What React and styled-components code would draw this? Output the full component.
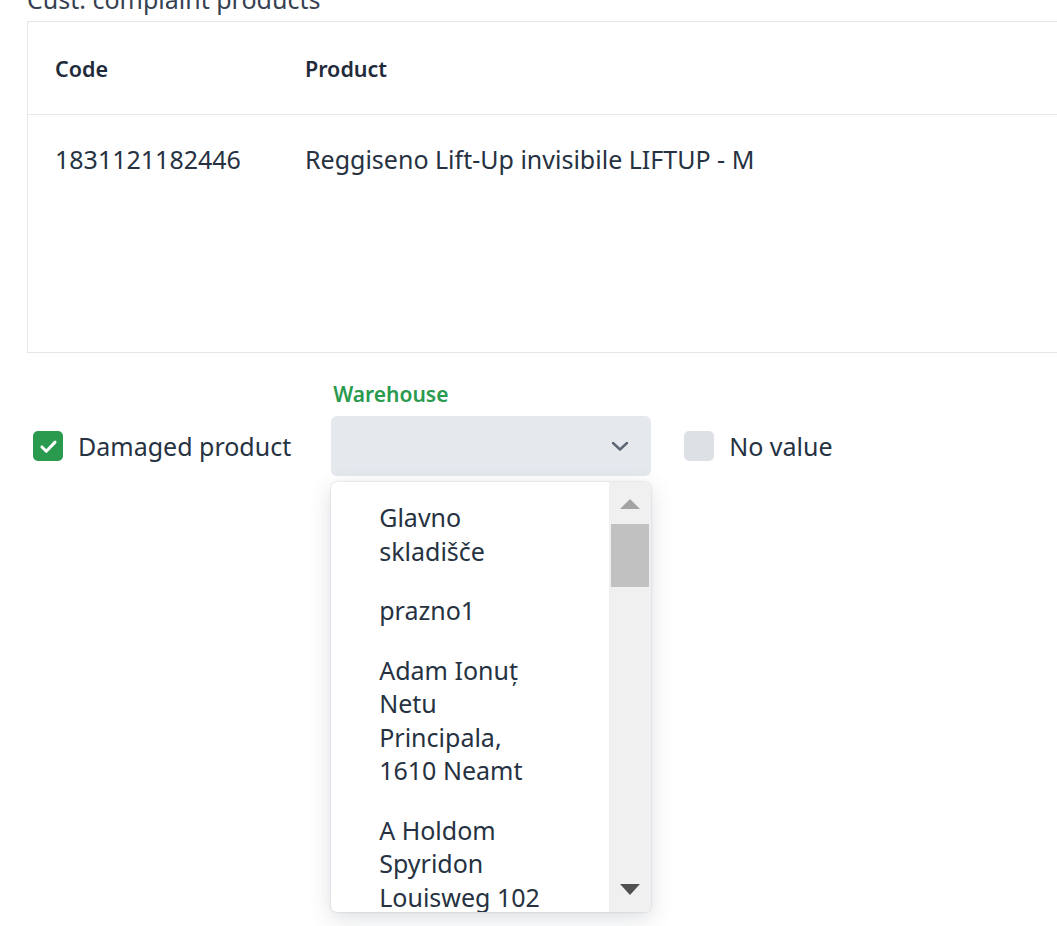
import React from 'react';
import styled, { createGlobalStyle } from 'styled-components';

const GlobalStyle = createGlobalStyle`
  html, body {
    margin: 0;
    padding: 0;
    background: #ffffff;
    overflow: hidden;
  }
  body {
    font-family: "Noto Sans", "Open Sans", sans-serif;
    color: #263241;
  }
`;

const Page = styled.div`
  padding-left: 27px;
  height: 943px;
  position: relative;
`;

const Title = styled.div`
  font-size: 25px;
  line-height: 32px;
  margin: -17px 0 6px;
  color: #364152;
`;

const Table = styled.div`
  width: 1060px;
  height: 332px;
  border: 1px solid #e4e6ea;
  border-right: none;
  box-sizing: border-box;
`;

const Row = styled.div`
  display: grid;
  grid-template-columns: 250px 1fr;
  padding-left: 27px;
  height: ${(p) => p.$height}px;
  align-items: ${(p) => (p.$head ? 'center' : 'start')};
  padding-top: ${(p) => (p.$head ? 0 : 28)}px;
  box-sizing: border-box;
  border-bottom: ${(p) => (p.$head ? '1px solid #e6e8ee' : 'none')};
`;

const HeadCell = styled.div`
  font-size: 21.5px;
  font-weight: 600;
  color: #1f2a3a;
`;

const Cell = styled.div`
  font-size: 25px;
  line-height: 32px;
  color: #263241;
`;

const Controls = styled.div`
  display: flex;
  align-items: flex-end;
  margin-top: 35px;
  padding-left: 6px;
`;

const CheckGroup = styled.label`
  display: flex;
  align-items: center;
  gap: 15px;
  height: 60px;
  font-size: 25px;
  color: #263241;
  margin-right: ${(p) => p.$gap || 0}px;
`;

const Box = styled.span`
  width: 30px;
  height: 30px;
  border-radius: 5px;
  background: ${(p) => (p.$checked ? '#2a9b4e' : '#dde1e6')};
  display: flex;
  align-items: center;
  justify-content: center;
`;

const Field = styled.div`
  display: flex;
  flex-direction: column;
  gap: 15px;
  margin-right: 33px;
  position: relative;
`;

const FieldLabel = styled.div`
  font-size: 21px;
  font-weight: 600;
  color: #2a9b4e;
  padding-left: 2px;
  line-height: 13px;
`;

const Select = styled.div`
  width: 320px;
  height: 60px;
  border-radius: 6px;
  background: #e5e8ed;
  display: flex;
  align-items: center;
  justify-content: flex-end;
  padding-right: 19px;
  box-sizing: border-box;
`;

const Dropdown = styled.div`
  position: absolute;
  top: calc(100% + 6px);
  left: 0;
  width: 320px;
  height: 430px;
  background: #ffffff;
  border-radius: 6px;
  box-shadow: 0 0 2px rgba(60, 70, 90, 0.25), 0 6px 22px rgba(60, 70, 90, 0.18);
  display: flex;
  overflow: hidden;
`;

const Options = styled.div`
  flex: 1;
  padding: 19px 60px 0 48px;
  overflow: hidden;
`;

const Option = styled.div`
  font-size: 25px;
  line-height: 33.5px;
  padding-bottom: 26px;
  color: #263241;
`;

const Scrollbar = styled.div`
  width: 42px;
  background: #f0f0f0;
  display: flex;
  flex-direction: column;
  align-items: center;
  padding: 17px 0 17px;
  box-sizing: border-box;
`;

const Arrow = styled.div`
  width: 0;
  height: 0;
  border-left: 10px solid transparent;
  border-right: 10px solid transparent;
  ${(p) =>
    p.$down
      ? 'border-top: 11px solid #505050; margin-top: auto;'
      : 'border-bottom: 10px solid #a3a3a3;'}
`;

const Thumb = styled.div`
  width: 38px;
  height: 63px;
  background: #c1c1c1;
  margin-top: 15px;
`;

const options = [
  'Glavno skladišče',
  'prazno1',
  'Adam Ionuț Netu Principala, 1610 Neamt',
  'A Holdom Spyridon Louisweg 102',
];

export default function App() {
  return (
    <>
      <GlobalStyle />
      <Page>
        <Title>Cust. complaint products</Title>
        <Table>
          <Row $head $height={93}>
            <HeadCell>Code</HeadCell>
            <HeadCell>Product</HeadCell>
          </Row>
          <Row>
            <Cell>1831121182446</Cell>
            <Cell>Reggiseno Lift-Up invisibile LIFTUP - M</Cell>
          </Row>
        </Table>

        <Controls>
          <CheckGroup $gap={40}>
            <Box $checked>
              <svg width="21" height="21" viewBox="0 0 24 24" fill="none" stroke="#fff" strokeWidth="3.4" strokeLinecap="round" strokeLinejoin="round">
                <path d="M4.5 12.5l5 5 10-10.5" />
              </svg>
            </Box>
            Damaged product
          </CheckGroup>

          <Field>
            <FieldLabel>Warehouse</FieldLabel>
            <Select>
              <svg width="24" height="24" viewBox="0 0 24 24" fill="none" stroke="#5d6675" strokeWidth="2.4" strokeLinecap="round" strokeLinejoin="round">
                <path d="M5 9l7 6.5L19 9" />
              </svg>
            </Select>
            <Dropdown>
              <Options>
                {options.map((o) => (
                  <Option key={o}>{o}</Option>
                ))}
              </Options>
              <Scrollbar>
                <Arrow />
                <Thumb />
                <Arrow $down />
              </Scrollbar>
            </Dropdown>
          </Field>

          <CheckGroup>
            <Box />
            No value
          </CheckGroup>
        </Controls>
      </Page>
    </>
  );
}
